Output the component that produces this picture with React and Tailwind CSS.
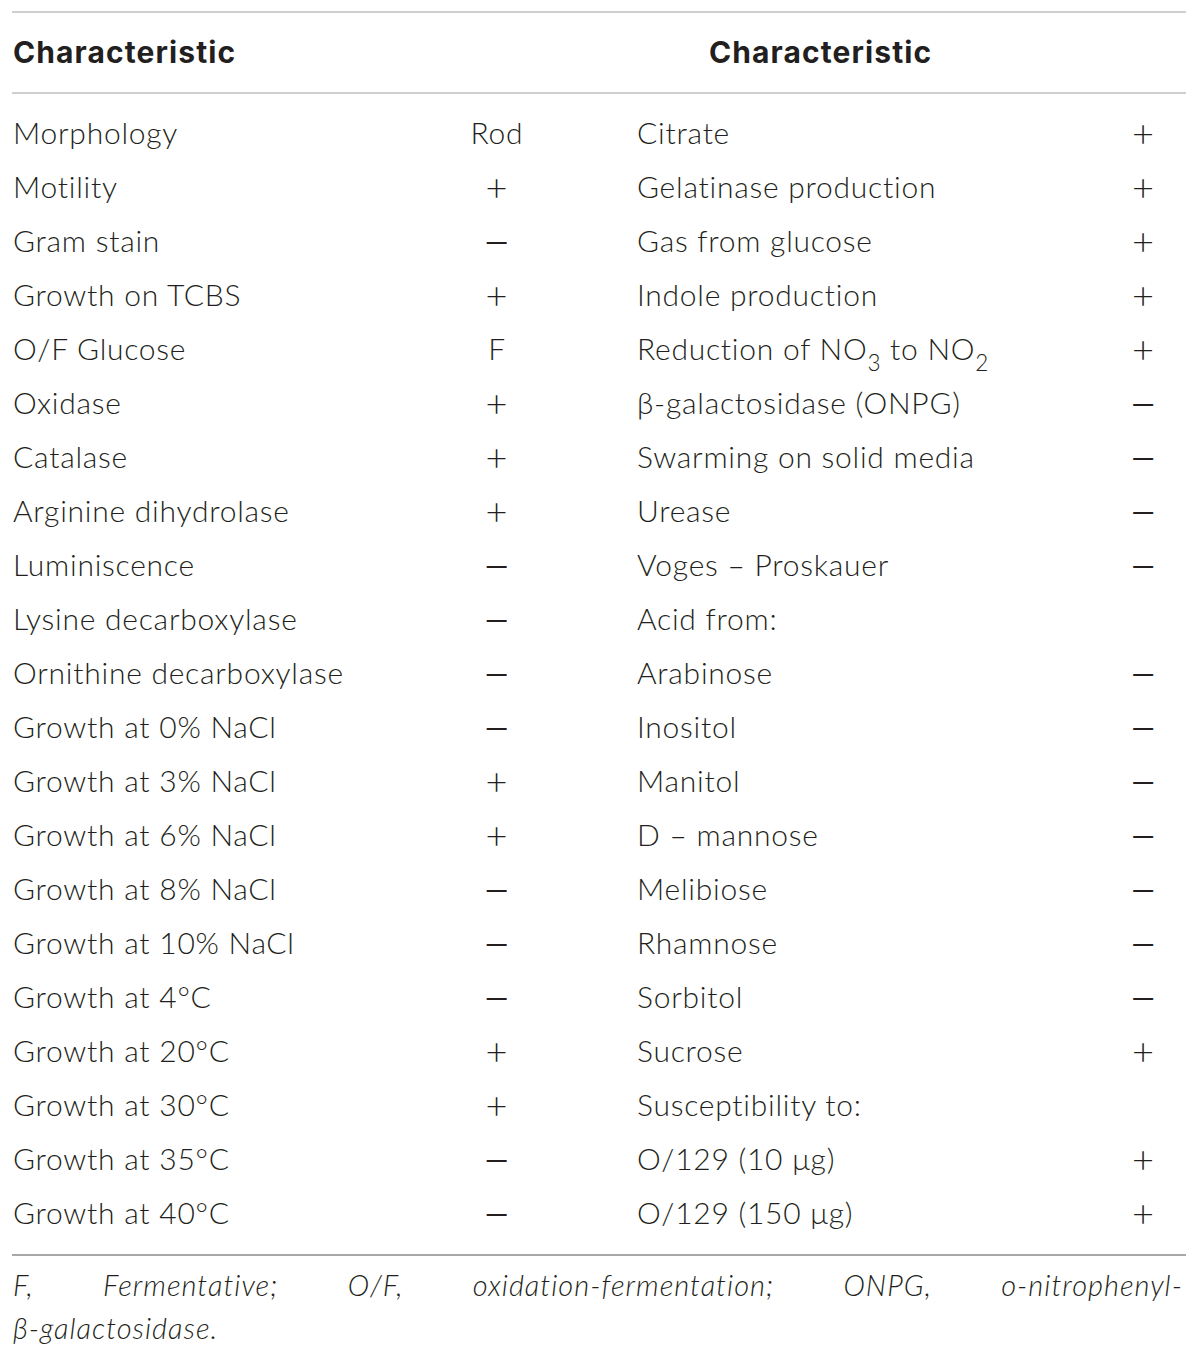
import React from 'react';

const P = '+';
const M = '\u2014';

// left half / right half of the table, row by row
const rows = [
  ['Morphology', 'Rod', 'Citrate', P],
  ['Motility', P, 'Gelatinase production', P],
  ['Gram stain', M, 'Gas from glucose', P],
  ['Growth on TCBS', P, 'Indole production', P],
  [
    'O/F Glucose',
    'F',
    <span>
      Reduction of NO<sub className="text-[0.75em] align-[-0.25em]">3</sub> to NO
      <sub className="text-[0.75em] align-[-0.25em]">2</sub>
    </span>,
    P,
  ],
  ['Oxidase', P, '\u03b2-galactosidase (ONPG)', M],
  ['Catalase', P, 'Swarming on solid media', M],
  ['Arginine dihydrolase', P, 'Urease', M],
  ['Luminiscence', M, 'Voges \u2013 Proskauer', M],
  ['Lysine decarboxylase', M, 'Acid from:', ''],
  ['Ornithine decarboxylase', M, 'Arabinose', M],
  ['Growth at 0% NaCl', M, 'Inositol', M],
  ['Growth at 3% NaCl', P, 'Manitol', M],
  ['Growth at 6% NaCl', P, 'D \u2013 mannose', M],
  ['Growth at 8% NaCl', M, 'Melibiose', M],
  ['Growth at 10% NaCl', M, 'Rhamnose', M],
  ['Growth at 4\u00b0C', M, 'Sorbitol', M],
  ['Growth at 20\u00b0C', P, 'Sucrose', P],
  ['Growth at 30\u00b0C', P, 'Susceptibility to:', ''],
  ['Growth at 35\u00b0C', M, 'O/129 (10 \u03bcg)', P],
  ['Growth at 40\u00b0C', M, 'O/129 (150 \u03bcg)', P],
];

const sym = (v) =>
  v === P ? 'text-[38px] leading-none' : v === M ? 'text-[30px] leading-none font-normal' : '';

export default function App() {
  return (
    <div
      className="min-h-[1361px] w-[1200px] bg-white text-[#231f20]"
      style={{ fontFamily: 'Lato, Inter, "Liberation Sans", sans-serif' }}
    >
      <div className="pt-[11px] pl-[12px] w-[1186px]">
        {/* header */}
        <div
          className="border-t-2 border-b-2 border-[#cfcfcf] grid grid-cols-[345px_280px_460px_89px] h-[83px] items-center text-[30px] font-bold tracking-[1.1px]"
          style={{ fontFamily: 'Inter, "Liberation Sans", sans-serif' }}
        >
          <div className="pl-[1px]">Characteristic</div>
          <div />
          <div className="pl-[72px] whitespace-nowrap">Characteristic</div>
          <div />
        </div>

        {/* body */}
        <div className="pt-[11px] pb-[15px] border-b-2 border-[#a8a8a8] text-[30px] font-light tracking-[0.75px]">
          {rows.map((r, i) => (
            <div key={i} className="grid grid-cols-[345px_280px_460px_89px] h-[54px] items-center">
              <div className="pl-[1px] whitespace-nowrap">{r[0]}</div>
              <div className={'text-center ' + sym(r[1])}>{r[1]}</div>
              <div className="whitespace-nowrap">{r[2]}</div>
              <div className={'text-center pl-[4px] ' + sym(r[3])}>{r[3]}</div>
            </div>
          ))}
        </div>

        {/* footnote */}
        <div className="pl-[1px] pr-[3px] text-[29px] italic font-light leading-[43px] pt-[7px] tracking-[1px]">
          <div className="flex justify-between">
            <span>F,</span>
            <span>Fermentative;</span>
            <span>O/F,</span>
            <span>oxidation-fermentation;</span>
            <span>ONPG,</span>
            <span>o-nitrophenyl-</span>
          </div>
          <div>{'\u03b2'}-galactosidase.</div>
        </div>
      </div>
    </div>
  );
}
